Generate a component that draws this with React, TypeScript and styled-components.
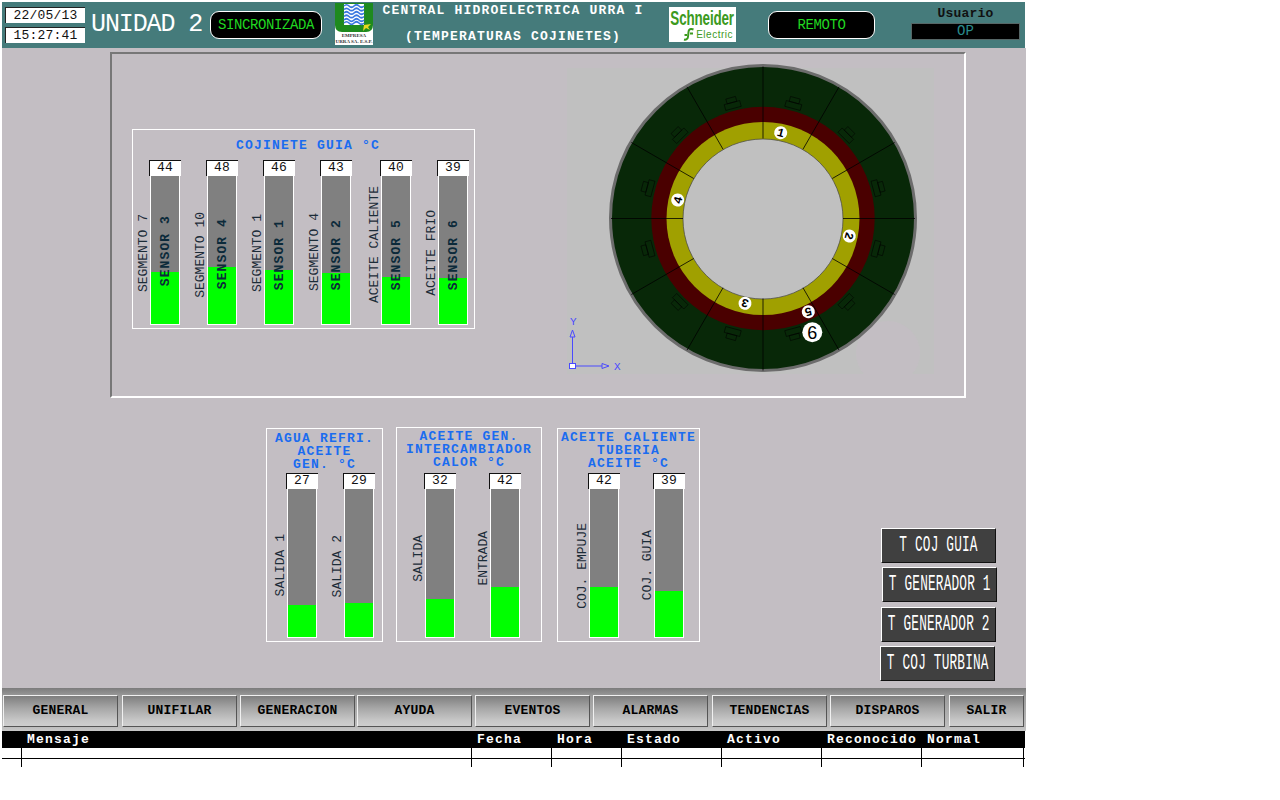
import React from 'react'
import styled, { createGlobalStyle } from 'styled-components'

const MONO = `'Liberation Mono', 'DejaVu Sans Mono', monospace`

const GlobalStyle = createGlobalStyle`
  html, body {
    margin: 0;
    padding: 0;
    background: #ffffff;
  }
  body {
    font-family: ${MONO};
  }
  * {
    box-sizing: border-box;
  }
`

const Screen = styled.div`
  width: 1024px;
  margin: 2px 0 0 2px;
`

/* header */

const Header = styled.header`
  display: flex;
  align-items: flex-start;
  width: 1023px;
  height: 46px;
  background: #457b7b;
`

const ClockColumn = styled.div`
  display: flex;
  flex-direction: column;
  gap: 4px;
  width: 80px;
  margin: 5px 0 0 3px;
`

const ClockBox = styled.div`
  height: 16px;
  background: #ffffff;
  border-top: 1px solid #222;
  border-left: 1px solid #222;
  color: #111;
  font-size: 13px;
  letter-spacing: 0.2px;
  line-height: 15px;
  text-align: center;
`

const UnitName = styled.div`
  width: 119px;
  margin: 8px 0 0 6px;
  color: #ffffff;
  font-size: 25px;
  line-height: 30px;
  letter-spacing: -1.1px;
  white-space: nowrap;
`

const StatusPill = styled.div<{ $width: number; $left: number }>`
  display: flex;
  align-items: center;
  justify-content: center;
  width: ${({ $width }) => $width}px;
  height: 28px;
  margin: 9px 0 0 ${({ $left }) => $left}px;
  background: #000;
  border: 1px solid #ffffff;
  border-radius: 9px;
  color: #20d820;
  font-size: 14px;
  letter-spacing: -0.4px;
`

const UrraLogo = styled.div`
  display: flex;
  flex-direction: column;
  align-items: center;
  width: 38px;
  height: 42px;
  margin: 1px 0 0 13px;
  background: #ffffff;
  overflow: hidden;
`

const UrraText = styled.div`
  color: #333;
  font-family: 'Liberation Serif', serif;
  font-size: 5px;
  font-weight: bold;
  line-height: 6px;
  white-space: nowrap;
`

const PlantTitle = styled.div`
  width: 262px;
  margin: -4px 0 0 9px;
  color: #ffffff;
  font-size: 13px;
  font-weight: bold;
  letter-spacing: 1.2px;
  line-height: 26px;
  text-align: center;
  white-space: nowrap;
`

const SchneiderLogo = styled.div`
  width: 67px;
  height: 35px;
  margin: 5px 0 0 25px;
  background: #ffffff;
  color: #3c9a1e;
  font-family: 'Liberation Sans', sans-serif;
`

const SchneiderWord = styled.div`
  width: 67px;
  margin-top: 1px;
  padding-left: 2px;
  font-size: 20px;
  font-weight: bold;
  letter-spacing: -0.2px;
  line-height: 20px;
  transform: scaleX(0.67);
  transform-origin: left center;
  white-space: nowrap;
`

const ElectricRow = styled.div`
  display: flex;
  align-items: center;
  justify-content: flex-end;
  gap: 1px;
  height: 13px;
  padding-right: 3px;
  font-size: 10px;
  letter-spacing: 0.5px;
`

const UserBlock = styled.div`
  display: flex;
  flex-direction: column;
  align-items: center;
  width: 109px;
  margin: 4px 0 0 36px;
`

const UserLabel = styled.div`
  height: 17px;
  color: #111;
  font-size: 13px;
  font-weight: bold;
  line-height: 15px;
  letter-spacing: 0.2px;
`

const UserValue = styled.div`
  width: 100%;
  height: 17px;
  background: #000;
  border: 1px solid #566;
  color: #2a8c8c;
  font-size: 14px;
  line-height: 14px;
  text-align: center;
`

/* process area */

const Main = styled.main`
  width: 1024px;
  height: 640px;
  padding-top: 4px;
  background: #c3bec3;
`

const Frame = styled.section`
  display: flex;
  align-items: flex-start;
  width: 856px;
  height: 346px;
  margin-left: 108px;
  border-style: solid;
  border-width: 2px;
  border-color: #777 #ffffff #ffffff #777;
`

const Panel = styled.div<{ $width: number; $height: number; $top?: number; $left?: number }>`
  flex: none;
  display: flex;
  flex-direction: column;
  width: ${({ $width }) => $width}px;
  height: ${({ $height }) => $height}px;
  margin-top: ${({ $top }) => $top ?? 0}px;
  margin-left: ${({ $left }) => $left ?? 0}px;
  border: 1px solid #ffffff;
`

const PanelTitle = styled.div<{ $height: number; $pad: number; $shift?: number }>`
  height: ${({ $height }) => $height}px;
  padding-top: ${({ $pad }) => $pad}px;
  padding-left: ${({ $shift }) => $shift ?? 0}px;
  color: #1a6cf0;
  font-size: 13px;
  font-weight: bold;
  letter-spacing: 1.2px;
  line-height: 13px;
  text-align: center;
  white-space: nowrap;
`

const GaugeRow = styled.div<{ $gap: number; $pad: number }>`
  display: flex;
  gap: ${({ $gap }) => $gap}px;
  padding-left: ${({ $pad }) => $pad}px;
`

const Gauge = styled.div<{ $extra?: number }>`
  display: flex;
  margin-left: ${({ $extra }) => $extra ?? 0}px;
`

const SideLabelSlot = styled.div<{ $shift: number }>`
  display: flex;
  align-items: center;
  justify-content: center;
  width: 12px;
  height: 165px;
  padding-top: ${({ $shift }) => $shift}px;
  padding-left: 2px;
`

const SideLabel = styled.span`
  flex: none;
  writing-mode: vertical-rl;
  transform: rotate(180deg);
  color: #1c2c38;
  font-size: 13px;
  line-height: 12px;
  white-space: nowrap;
`

const GaugeColumn = styled.div`
  display: flex;
  flex-direction: column;
  width: 32px;
`

const ValueBox = styled.div`
  height: 16px;
  padding-right: 1px;
  background: #ffffff;
  border-top: 1px solid #111;
  border-left: 1px solid #111;
  color: #111;
  font-size: 13px;
  letter-spacing: 0.2px;
  line-height: 14px;
  text-align: center;
`

const Bar = styled.div`
  position: relative;
  display: flex;
  align-items: flex-end;
  width: 30px;
  height: 149px;
  margin-left: 1px;
  background: #808080;
  border: 1px solid #ffffff;
  border-top: none;
`

const BarFill = styled.div`
  width: 100%;
  background: #00ff00;
`

const SensorLabel = styled.span<{ $bottom: number }>`
  position: absolute;
  left: 8px;
  bottom: ${({ $bottom }) => $bottom}px;
  writing-mode: vertical-rl;
  transform: rotate(180deg);
  color: #0c2a3a;
  font-size: 13px;
  font-weight: bold;
  letter-spacing: 1.1px;
  line-height: 13px;
  white-space: nowrap;
`

const Diagram = styled.svg`
  flex: none;
  display: block;
  width: 368px;
  height: 312px;
  margin: 10px 0 0 92px;
`

const LowerRow = styled.div`
  display: flex;
  align-items: flex-start;
  margin: 29px 0 0 264px;
`

const SideButtons = styled.div`
  display: flex;
  flex-direction: column;
  gap: 4px;
  margin: 101px 0 0 0;
`

const SideButton = styled.button<{ $left: number; $top?: number }>`
  display: flex;
  align-items: center;
  justify-content: center;
  width: 115px;
  height: 35px;
  margin: ${({ $top }) => $top ?? 0}px 0 0 ${({ $left }) => $left}px;
  padding: 1px 0 0;
  background: #404040;
  border-style: solid;
  border-width: 1px;
  border-color: #ffffff #111 #111 #ffffff;
  overflow: hidden;
`

const SideButtonText = styled.span`
  flex: none;
  color: #ffffff;
  font-family: ${MONO};
  font-size: 22px;
  line-height: 24px;
  letter-spacing: 0.3px;
  transform: scaleX(0.58);
  white-space: nowrap;
`

/* navigation */

const Nav = styled.nav`
  display: flex;
  width: 1024px;
  height: 43px;
  padding: 7px 0 0 1px;
  background: linear-gradient(#7c7c7c, #9c9c9c 20%, #bdbdbd 90%, #c8c8c8);
`

const NavButton = styled.button<{ $width: number; $gap: number }>`
  width: ${({ $width }) => $width}px;
  height: 32px;
  margin: 0 0 0 ${({ $gap }) => $gap}px;
  padding: 0 0 2px;
  background: linear-gradient(#7e7e7e, #a6a6a6 40%, #c6c6c6 80%, #cecece);
  border-style: solid;
  border-width: 1px;
  border-color: #f0f0f0 #555 #555 #f0f0f0;
  color: #000;
  font-family: ${MONO};
  font-size: 13px;
  font-weight: bold;
  letter-spacing: 0.2px;
`

/* alarm table */

const COLUMNS = '19px 450px 80px 70px 100px 100px 100px 103px'

const AlarmHead = styled.div`
  display: grid;
  grid-template-columns: ${COLUMNS};
  width: 1023px;
  height: 17px;
  background: #000;
  color: #ffffff;
  font-size: 13px;
  font-weight: bold;
  letter-spacing: 1.2px;
  line-height: 17px;
`

const HeadCell = styled.div`
  padding-left: 6px;
  white-space: nowrap;
`

const AlarmRow = styled.div<{ $height: number; $line?: boolean }>`
  display: grid;
  grid-template-columns: ${COLUMNS};
  width: 1023px;
  height: ${({ $height }) => $height}px;
  border-bottom: ${({ $line }) => ($line ? '1px solid #000' : 'none')};
`

const AlarmCell = styled.div<{ $first?: boolean; $last?: boolean }>`
  border-left: ${({ $first }) => ($first ? 'none' : '1px solid #000')};
  border-right: ${({ $last }) => ($last ? '1px solid #000' : 'none')};
`

/* data */

type GaugeData = {
  value: number
  label: string
  shift: number
  sensor?: string
  sensorBottom?: number
  extra?: number
}

const guideGauges: GaugeData[] = [
  { value: 44, label: 'SEGMENTO 7', shift: 22, sensor: 'SENSOR 3', sensorBottom: 38 },
  { value: 48, label: 'SEGMENTO 10', shift: 24, sensor: 'SENSOR 4', sensorBottom: 35 },
  { value: 46, label: 'SEGMENTO 1', shift: 22, sensor: 'SENSOR 1', sensorBottom: 34 },
  { value: 43, label: 'SEGMENTO 4', shift: 19, sensor: 'SENSOR 2', sensorBottom: 34 },
  { value: 40, label: 'ACEITE CALIENTE', shift: 5, sensor: 'SENSOR 5', sensorBottom: 34, extra: 3 },
  { value: 39, label: 'ACEITE FRIO', shift: 20, sensor: 'SENSOR 6', sensorBottom: 34 },
]

const lowerPanels = [
  {
    width: 117,
    height: 214,
    top: 1,
    left: 0,
    titleHeight: 44,
    titlePad: 3,
    gap: 13,
    pad: 7,
    title: ['AGUA REFRI.', 'ACEITE', 'GEN. °C'],
    gauges: [
      { value: 27, label: 'SALIDA 1', shift: 20 },
      { value: 29, label: 'SALIDA 2', shift: 21 },
    ],
  },
  {
    width: 146,
    height: 215,
    top: 0,
    left: 13,
    titleHeight: 45,
    titlePad: 2,
    gap: 21,
    pad: 15,
    title: ['ACEITE GEN.', 'INTERCAMBIADOR', 'CALOR °C'],
    gauges: [
      { value: 32, label: 'SALIDA', shift: 6 },
      { value: 42, label: 'ENTRADA', shift: 6 },
    ],
  },
  {
    width: 143,
    height: 214,
    top: 1,
    left: 15,
    titleHeight: 44,
    titlePad: 2,
    gap: 21,
    pad: 18,
    title: ['ACEITE CALIENTE', 'TUBERIA', 'ACEITE °C'],
    gauges: [
      { value: 42, label: 'COJ. EMPUJE', shift: 21 },
      { value: 39, label: 'COJ. GUIA', shift: 19 },
    ],
  },
]

const sideButtons = [
  { text: 'T COJ GUIA', left: 181, top: 0 },
  { text: 'T GENERADOR 1', left: 182, top: 0 },
  { text: 'T GENERADOR 2', left: 181, top: 1 },
  { text: 'T COJ TURBINA', left: 180, top: 0 },
]

const navButtons = [
  { text: 'GENERAL', width: 115, gap: 0 },
  { text: 'UNIFILAR', width: 115, gap: 4 },
  { text: 'GENERACION', width: 115, gap: 3 },
  { text: 'AYUDA', width: 115, gap: 2 },
  { text: 'EVENTOS', width: 115, gap: 3 },
  { text: 'ALARMAS', width: 115, gap: 3 },
  { text: 'TENDENCIAS', width: 115, gap: 4 },
  { text: 'DISPAROS', width: 115, gap: 3 },
  { text: 'SALIR', width: 75, gap: 4 },
]

const alarmColumns = ['', 'Mensaje', 'Fecha', 'Hora', 'Estado', 'Activo', 'Reconocido', 'Normal']

const SCALE_MAX = 125

const GaugeItem = ({ value, label, shift, sensor, sensorBottom, extra }: GaugeData) => (
  <Gauge $extra={extra}>
    <SideLabelSlot $shift={shift}>
      <SideLabel>{label}</SideLabel>
    </SideLabelSlot>
    <GaugeColumn>
      <ValueBox>{value}</ValueBox>
      <Bar>
        <BarFill style={{ height: `${(value / SCALE_MAX) * 100}%` }} />
        {sensor && <SensorLabel $bottom={sensorBottom ?? 34}>{sensor}</SensorLabel>}
      </Bar>
    </GaugeColumn>
  </Gauge>
)

// bearing drawing, coordinates are the page ones so they can be read off the reference
const CX = 763
const CY = 218.5

const polar = (deg: number, r: number) => {
  const a = ((deg - 90) * Math.PI) / 180
  return { x: CX + r * Math.cos(a), y: CY + r * Math.sin(a) }
}

const segmentAngles = Array.from({ length: 12 }, (_, i) => i * 30)
const padAngles = Array.from({ length: 12 }, (_, i) => i * 30 + 15)

const badges = [
  { n: '1', x: 780.7, y: 132.7, r: 6.5, rot: 15, size: 12 },
  { n: '4', x: 677.7, y: 200, r: 6.5, rot: -75, size: 12 },
  { n: '2', x: 849.3, y: 236, r: 6.5, rot: 105, size: 12 },
  { n: '3', x: 745, y: 303.3, r: 6.5, rot: 195, size: 12 },
  { n: '5', x: 808.3, y: 311.7, r: 6.5, rot: 165, size: 12 },
]

const BearingDiagram = () => (
  <Diagram viewBox="567 64 368 312">
    <rect x="567" y="68" width="367" height="306" fill="#c0c0c0" />
    <circle cx="888" cy="353" r="32" fill="#c3bec3" />
    <circle cx={CX} cy={CY - 0.5} r="152.5" fill="#082808" stroke="#6c6c6c" strokeWidth="3" />
    {padAngles.map((deg) => (
      <g
        key={deg}
        transform={`rotate(${deg} ${CX} ${CY}) translate(${CX} ${CY - 118})`}
        fill="none"
        stroke="#000"
        strokeWidth="0.5"
      >
        <rect x="-8" y="-2" width="16" height="6" />
        <rect x="-5" y="-7" width="10" height="5" />
      </g>
    ))}
    <circle cx={CX} cy={CY} r="111.7" fill="#4a0000" />
    <circle cx={CX} cy={CY} r="96.5" fill="#a0a000" />
    <circle cx={CX} cy={CY + 0.5} r="80" fill="#c0c0c0" stroke="#444" strokeWidth="0.7" />
    {segmentAngles.map((deg) => {
      const a = polar(deg, 80)
      const b = polar(deg, 152)
      return <line key={deg} x1={a.x} y1={a.y} x2={b.x} y2={b.y} stroke="#000" strokeWidth="0.8" />
    })}
    {badges.map((b) => (
      <g key={b.n} transform={`rotate(${b.rot} ${b.x} ${b.y})`}>
        <circle cx={b.x} cy={b.y} r={b.r} fill="#ffffff" />
        <text x={b.x} y={b.y + 4} fontFamily={MONO} fontSize={b.size} fontWeight="bold" textAnchor="middle" fill="#000">
          {b.n}
        </text>
      </g>
    ))}
    <circle cx="812.3" cy="332.3" r="10" fill="#ffffff" />
    <text x="812.3" y="338.5" fontFamily="'Liberation Sans', sans-serif" fontSize="18" textAnchor="middle" fill="#000">
      6
    </text>
    <g stroke="#4a4aff" strokeWidth="1" fill="none">
      <line x1="572.5" y1="337" x2="572.5" y2="363" />
      <path d="M572.5 330 L575 337 L570 337 Z" />
      <rect x="569.5" y="363.5" width="6" height="5" fill="#ffffff" />
      <line x1="575.5" y1="366" x2="602" y2="366" />
      <path d="M609 366 L602 363.5 L602 368.5 Z" />
    </g>
    <text x="614" y="370" fontFamily={MONO} fontSize="11" fill="#4a4aff">
      X
    </text>
    <text x="570" y="325" fontFamily={MONO} fontSize="11" fill="#4a4aff">
      Y
    </text>
  </Diagram>
)

const App = (): React.ReactElement => (
  <>
    <GlobalStyle />
    <Screen>
      <Header>
        <ClockColumn>
          <ClockBox>22/05/13</ClockBox>
          <ClockBox>15:27:41</ClockBox>
        </ClockColumn>
        <UnitName>UNIDAD 2</UnitName>
        <StatusPill $width={112} $left={0}>
          SINCRONIZADA
        </StatusPill>
        <UrraLogo>
          <svg width="38" height="30" viewBox="0 0 38 30">
            <path d="M0 0 H38 V22 Q38 29 31 29 H7 Q0 29 0 22 Z" fill="#1e8a1e" />
            <rect x="9" y="1" width="20" height="21" fill="#ffffff" />
            {[3, 6.5, 10, 13.5, 17, 20].map((y) => (
              <path
                key={y}
                d={`M9 ${y} q2.5 -2.5 5 0 t5 0 t5 0 t5 0`}
                fill="none"
                stroke="#3a78e0"
                strokeWidth="1.7"
              />
            ))}
            <path d="M28 28 L29 22 L36 21 L33 24 L35 27 L31 25 Z" fill="#e8d820" />
          </svg>
          <UrraText>EMPRESA</UrraText>
          <UrraText>URRA SA. E.S.P.</UrraText>
        </UrraLogo>
        <PlantTitle>
          CENTRAL HIDROELECTRICA URRA I
          <br />
          (TEMPERATURAS COJINETES)
        </PlantTitle>
        <SchneiderLogo>
          <SchneiderWord>Schneider</SchneiderWord>
          <ElectricRow>
            <svg width="12" height="13" viewBox="0 0 12 13">
              <path
                d="M10.5 1.5 C7 0 5.5 2 5.5 4 L5 9 C4.8 11 3 12 1 11.5 M1.5 7 H4 M7 5.5 H10"
                fill="none"
                stroke="#3c9a1e"
                strokeWidth="2"
              />
            </svg>
            <span>Electric</span>
          </ElectricRow>
        </SchneiderLogo>
        <StatusPill $width={107} $left={32}>
          REMOTO
        </StatusPill>
        <UserBlock>
          <UserLabel>Usuario</UserLabel>
          <UserValue>OP</UserValue>
        </UserBlock>
      </Header>

      <Main>
        <Frame>
          <Panel $width={343} $height={200} $top={75} $left={20}>
            <PanelTitle $height={30} $pad={9} $shift={9}>
              COJINETE GUIA °C
            </PanelTitle>
            <GaugeRow $gap={13} $pad={4}>
              {guideGauges.map((g) => (
                <GaugeItem key={g.sensor} {...g} />
              ))}
            </GaugeRow>
          </Panel>
          <BearingDiagram />
        </Frame>

        <LowerRow>
          {lowerPanels.map((p) => (
            <Panel key={p.title[0] + p.title[1]} $width={p.width} $height={p.height} $top={p.top} $left={p.left}>
              <PanelTitle $height={p.titleHeight} $pad={p.titlePad}>
                {p.title.map((line) => (
                  <div key={line}>{line}</div>
                ))}
              </PanelTitle>
              <GaugeRow $gap={p.gap} $pad={p.pad}>
                {p.gauges.map((g) => (
                  <GaugeItem key={g.label} {...g} />
                ))}
              </GaugeRow>
            </Panel>
          ))}
          <SideButtons>
            {sideButtons.map((b) => (
              <SideButton key={b.text} $left={b.left} $top={b.top}>
                <SideButtonText>{b.text}</SideButtonText>
              </SideButton>
            ))}
          </SideButtons>
        </LowerRow>
      </Main>

      <Nav>
        {navButtons.map((b) => (
          <NavButton key={b.text} $width={b.width} $gap={b.gap}>
            {b.text}
          </NavButton>
        ))}
      </Nav>

      <AlarmHead>
        {alarmColumns.map((c, i) => (
          <HeadCell key={i}>{c}</HeadCell>
        ))}
      </AlarmHead>
      <AlarmRow $height={11} $line>
        {alarmColumns.map((c, i) => (
          <AlarmCell key={i} $first={i === 0} $last={i === alarmColumns.length - 1} />
        ))}
      </AlarmRow>
      <AlarmRow $height={8}>
        {alarmColumns.map((c, i) => (
          <AlarmCell key={i} $first={i === 0} $last={i === alarmColumns.length - 1} />
        ))}
      </AlarmRow>
    </Screen>
  </>
)

export default App
